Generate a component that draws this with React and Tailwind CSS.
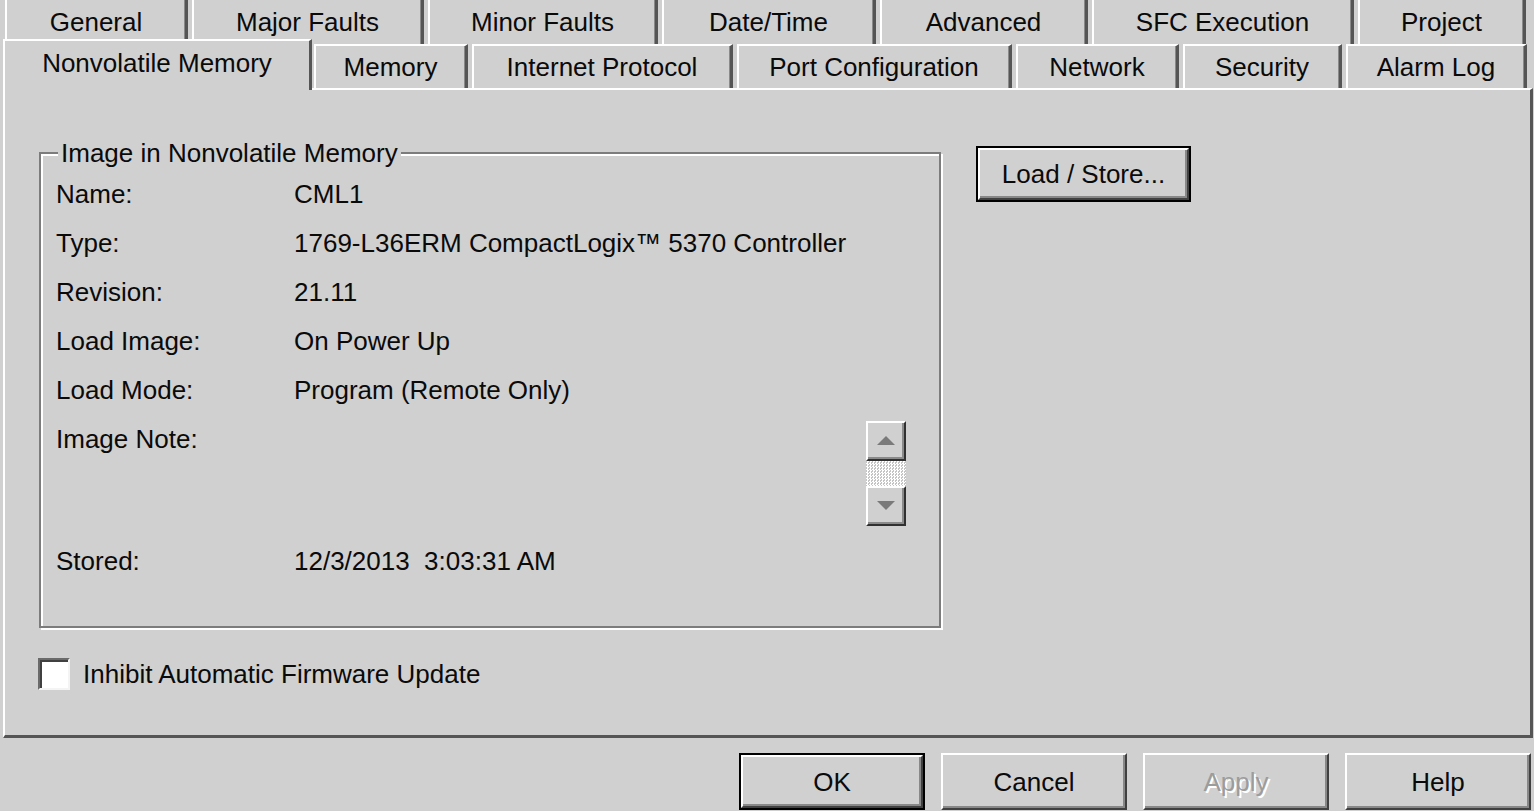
import React from 'react';

const topTabs = [
  ['General', 'w-[183px]'],
  ['Major Faults', 'w-[232px]'],
  ['Minor Faults', 'w-[230px]'],
  ['Date/Time', 'w-[214px]'],
  ['Advanced', 'w-[208px]'],
  ['SFC Execution', 'w-[262px]'],
  ['Project', 'w-[168px]'],
];

const lowerTabs = [
  ['Memory', 'w-[154px]'],
  ['Internet Protocol', 'w-[261px]'],
  ['Port Configuration', 'w-[275px]'],
  ['Network', 'w-[163px]'],
  ['Security', 'w-[159px]'],
  ['Alarm Log', 'w-[181px]'],
];

const rows = [
  ['Name:', 'CML1'],
  ['Type:', '1769-L36ERM CompactLogix\u2122 5370 Controller'],
  ['Revision:', '21.11'],
  ['Load Image:', 'On Power Up'],
  ['Load Mode:', 'Program (Remote Only)'],
];

const tabBase =
  'flex items-center justify-center shrink-0 bg-[#d0d0d0] border-l-2 border-l-white border-r-[3px] border-r-[#555555] shadow-[inset_-1px_0_0_#8a8a8a]';

const Button = ({ children, isDefault, disabled, className = '' }) => (
  <div className={`${isDefault ? 'border-2 border-black' : ''} ${className}`}>
    <div className="h-full flex items-center justify-center border-2 border-t-white border-l-white border-r-[#404040] border-b-[#404040] shadow-[inset_-2px_-2px_0_#888888]">
      <span
        className={
          disabled
            ? 'text-[#9c9c9c] [text-shadow:2px_2px_0_#ffffff]'
            : 'text-[#0a0a0a]'
        }
      >
        {children}
      </span>
    </div>
  </div>
);

const ScrollArrow = ({ up }) => (
  <div className="w-[40px] h-[40px] flex items-center justify-center bg-[#d0d0d0] border-2 border-t-white border-l-white border-r-[#303030] border-b-[#303030] shadow-[inset_-2px_-2px_0_#8a8a8a]">
    <svg width="18" height="10" viewBox="0 0 18 10">
      {up ? (
        <polygon points="9,0 18,9 0,9" fill="#7a7a7a" />
      ) : (
        <polygon points="0,0 18,0 9,9" fill="#7a7a7a" />
      )}
    </svg>
  </div>
);

export default function App() {
  return (
    <div className="w-[1534px] h-[811px] overflow-hidden bg-[#d0d0d0] text-[26px] leading-[30px] text-[#0a0a0a] font-['Liberation_Sans',Arial,sans-serif]">
      {/* upper tab row */}
      <div className="flex gap-[4px] pl-[5px] h-[44px]">
        {topTabs.map(([label, w]) => (
          <div key={label} className={`${tabBase} ${w} h-[44px]`}>
            {label}
          </div>
        ))}
      </div>

      {/* lower tab row */}
      <div className="flex items-end gap-[4px] pl-[3px] h-[49px] -mt-[5px] relative">
        <div className="relative z-10 flex items-start justify-center pt-[7px] w-[309px] h-[51px] -mb-[2px] -mr-[2px] bg-[#d0d0d0] border-l-2 border-t-2 border-l-white border-t-white border-r-[3px] border-r-[#555555]">
          Nonvolatile Memory
        </div>
        {lowerTabs.map(([label, w]) => (
          <div
            key={label}
            className={`${tabBase} ${w} h-[44px] border-t-2 border-t-white`}
          >
            {label}
          </div>
        ))}
      </div>

      {/* tab page */}
      <div className="ml-[3px] w-[1530px] h-[650px] border-t-2 border-l-2 border-t-white border-l-white border-r-[3px] border-b-[3px] border-r-[#555555] border-b-[#555555]">
        <div className="flex items-start">
          <div className="relative ml-[34px] mt-[62px] w-[902px] h-[476px] border-2 border-[#7c7c7c] shadow-[inset_2px_2px_0_#ffffff,2px_2px_0_#ffffff] pt-[15px] pl-[15px] pr-[33px]">
            <span className="absolute -top-[16px] left-[17px] px-[3px] bg-[#d0d0d0]">
              Image in Nonvolatile Memory
            </span>
            {rows.map(([k, v]) => (
              <div key={k} className="flex items-center h-[49px]">
                <span className="w-[238px] shrink-0">{k}</span>
                <span>{v}</span>
              </div>
            ))}
            <div className="flex h-[122px]">
              <div className="w-[238px] h-[49px] flex items-center shrink-0">
                Image Note:
              </div>
              <div className="flex-1" />
              <div className="mt-[7px] flex flex-col w-[40px]">
                <ScrollArrow up />
                <div className="h-[25px] bg-[repeating-conic-gradient(#ffffff_0_25%,#c4c4c4_0_50%)] bg-[length:3px_3px]" />
                <ScrollArrow />
              </div>
            </div>
            <div className="flex items-center h-[49px]">
              <span className="w-[238px] shrink-0">Stored:</span>
              <span className="whitespace-pre">12/3/2013  3:03:31 AM</span>
            </div>
          </div>
          <Button isDefault className="ml-[35px] mt-[56px] w-[215px] h-[56px]">
            Load / Store...
          </Button>
        </div>

        <div className="flex items-center ml-[33px] mt-[30px]">
          <div className="w-[32px] h-[32px] bg-white border-2 border-t-[#6a6a6a] border-l-[#6a6a6a] border-r-[#f4f4f4] border-b-[#f4f4f4] shadow-[inset_2px_2px_0_#404040]" />
          <span className="ml-[13px]">Inhibit Automatic Firmware Update</span>
        </div>
      </div>

      {/* dialog buttons */}
      <div className="flex justify-end gap-[16px] pr-[3px] mt-[15px]">
        <Button isDefault className="w-[186px] h-[57px]">OK</Button>
        <Button className="w-[186px] h-[57px]">Cancel</Button>
        <Button disabled className="w-[186px] h-[57px]">Apply</Button>
        <Button className="w-[186px] h-[57px]">Help</Button>
      </div>
    </div>
  );
}
